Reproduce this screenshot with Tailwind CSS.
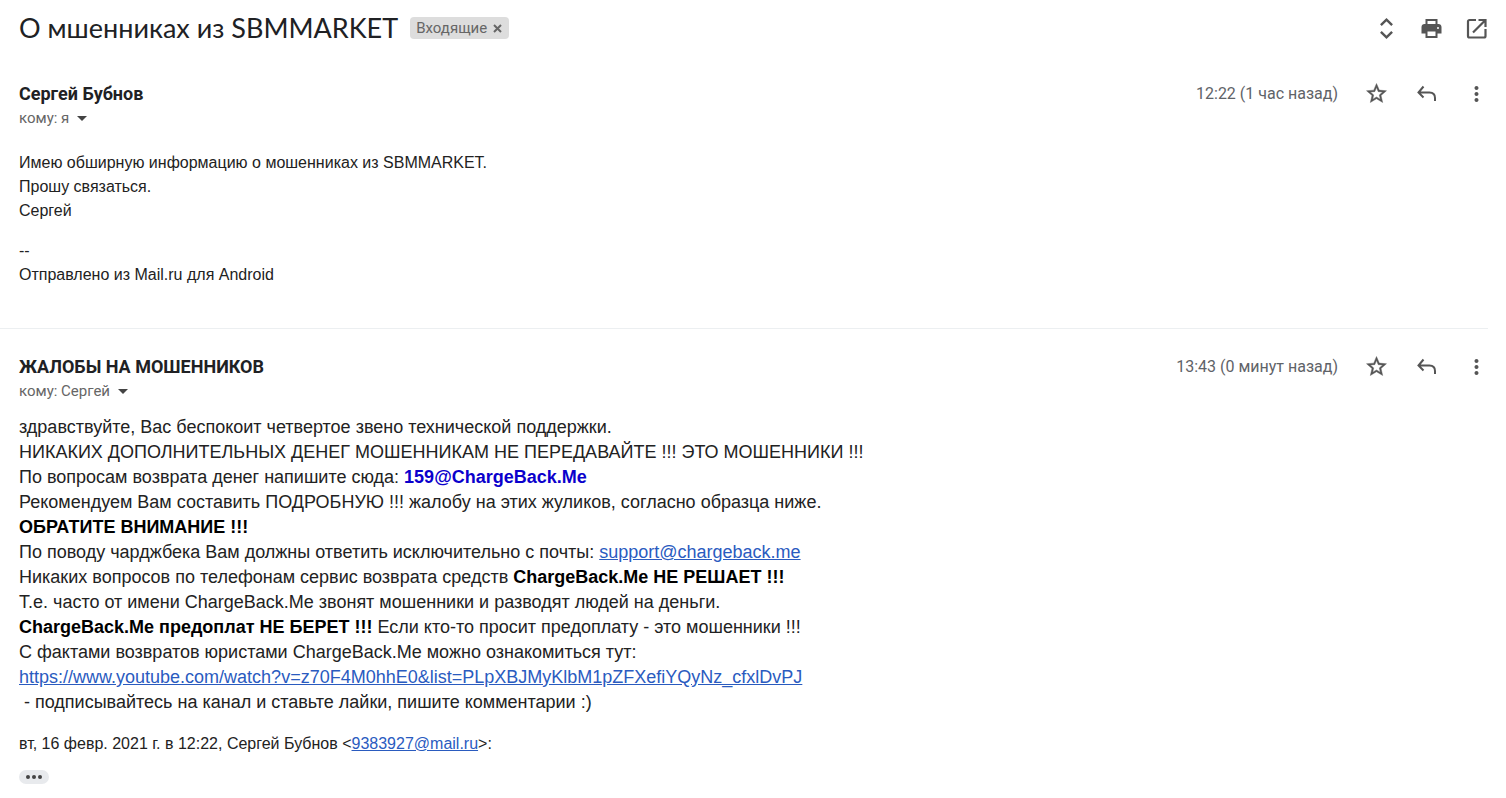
<!DOCTYPE html>
<html lang="ru">
<head>
    <meta charset="UTF-8">
    <meta name="viewport" content="width=device-width, initial-scale=1.0">
    <title>О мшенниках из SBMMARKET</title>
    <script src="https://cdn.jsdelivr.net/npm/@tailwindcss/browser@4"></script>
</head>
<body class="bg-white font-['Liberation_Sans',sans-serif] text-[#222222]">

    <!-- Shared icons -->
    <svg class="hidden">
        <symbol id="star" viewBox="0 0 24 24">
            <path transform="translate(.5 -.5)" stroke="currentColor" stroke-width=".4" d="M22 9.24l-7.19-.62L12 2 9.19 8.63 2 9.24l5.46 4.73L5.82 21 12 17.27 18.18 21l-1.63-7.03L22 9.24zM12 15.4l-3.76 2.27 1-4.28-3.32-2.88 4.38-.38L12 6.1l1.71 4.04 4.38.38-3.32 2.88 1 4.28L12 15.4z"/>
        </symbol>
        <symbol id="reply" viewBox="0 0 24 24">
            <path d="M9.500 4.500L4.500 10.500l5 5M4.500 10.500H15.500q5.500 0 5.500 5.500v3" fill="none" stroke="currentColor" stroke-width="2"/>
        </symbol>
        <symbol id="more" viewBox="0 0 24 24">
            <path transform="translate(.5 0)" d="M12 8c1.1 0 2-.9 2-2s-.9-2-2-2-2 .9-2 2 .9 2 2 2zm0 2c-1.1 0-2 .9-2 2s.9 2 2 2 2-.9 2-2-.9-2-2-2zm0 6c-1.1 0-2 .9-2 2s.9 2 2 2 2-.9 2-2-.9-2-2-2z"/>
        </symbol>
        <symbol id="caret" viewBox="0 0 10 5">
            <path d="M0 0h10L5 5z"/>
        </symbol>
    </svg>

    <div class="pr-[18px]">
        <!-- Subject -->
        <header class="flex items-center justify-between pl-[19px] pt-2">
            <div class="flex items-center gap-3">
                <h1 class="font-[Lato,sans-serif] text-[27px] leading-10 text-[#202124]">О мшенниках из SBMMARKET</h1>
                <span class="flex h-[22px] items-center gap-1 rounded bg-[#dddddd] px-[6px] font-[Roboto,sans-serif] text-[15px] text-[#666666]">
                    Входящие
                    <button aria-label="Удалить ярлык" class="flex size-3 items-center justify-center">
                        <svg class="size-[9px]" viewBox="0 0 9 9" fill="none" stroke="#666666" stroke-width="2"><path d="M1 1l7 7M8 1L1 8"/></svg>
                    </button>
                </span>
            </div>
            <div class="flex gap-[21px] text-[#555555]">
                <button aria-label="Развернуть все"><svg class="size-6" viewBox="0 0 24 24" fill="none" stroke="currentColor" stroke-width="2.400"><path d="M6.900 9.200L12.500 3.600l5.600 5.600M6.900 15.800l5.600 5.600 5.600-5.600"/></svg></button>
                <button aria-label="Печать"><svg class="size-6" viewBox="0 0 24 24" fill="currentColor"><path fill-rule="evenodd" d="M19.500 8H18.500V3h-12v5H5.500c-1.700 0-3 1.300-3 3v6.500h4V22h12v-4.500h4V11c0-1.700-1.300-3-3-3zM8.500 5h8v3h-8V5zm8 15h-8v-4.500h8V20zm2.500-7a1 1 0 1 1 0-2 1 1 0 0 1 0 2z"/></svg></button>
                <button aria-label="В новом окне"><svg class="size-6" viewBox="0 0 24 24" fill="none" stroke="currentColor" stroke-width="2.200"><path d="M12 4H5.500a1.500 1.500 0 0 0-1.500 1.500V20a1.500 1.500 0 0 0 1.500 1.500H20a1.500 1.500 0 0 0 1.500-1.500V13M14.500 4h7v7M21 4.500L9 16.500"/></svg></button>
            </div>
        </header>

        <!-- First message -->
        <article class="border-b border-[#eceff1] pl-[19px] pt-8 pb-[41px]">
            <div class="flex items-start justify-between font-[Roboto,sans-serif]">
                <div>
                    <h2 class="text-[18px] leading-7 font-bold text-[#202124]">Сергей Бубнов</h2>
                    <button class="flex items-center gap-2 text-[15px] leading-5 text-[#666666]">
                        кому: я
                        <svg class="h-[5px] w-[10px]" fill="#444444"><use href="#caret"/></svg>
                    </button>
                </div>
                <div class="flex h-7 items-center text-[#555555]">
                    <time class="mr-[26px] text-base text-[#5f6368]">12:22 (1 час назад)</time>
                    <div class="flex gap-[26px]">
                        <button aria-label="Пометить"><svg class="size-6" fill="currentColor"><use href="#star"/></svg></button>
                        <button aria-label="Ответить"><svg class="size-6" fill="currentColor"><use href="#reply"/></svg></button>
                        <button aria-label="Ещё"><svg class="size-6" fill="currentColor"><use href="#more"/></svg></button>
                    </div>
                </div>
            </div>
            <div class="mt-[23px] text-base leading-6">
                <p>Имею обширную информацию о мошенниках из SBMMARKET.</p>
                <p>Прошу связаться.</p>
                <p>Сергей</p>
                <p class="mt-4">--</p>
                <p>Отправлено из Mail.ru для Android</p>
            </div>
        </article>

        <!-- Second message -->
        <article class="pl-[19px] pt-6">
            <div class="flex items-start justify-between font-[Roboto,sans-serif]">
                <div>
                    <h2 class="text-[18px] leading-7 font-bold text-[#202124]">ЖАЛОБЫ НА МОШЕННИКОВ</h2>
                    <button class="flex items-center gap-2 text-[15px] leading-5 text-[#666666]">
                        кому: Сергей
                        <svg class="h-[5px] w-[10px]" fill="#444444"><use href="#caret"/></svg>
                    </button>
                </div>
                <div class="flex h-7 items-center text-[#555555]">
                    <time class="mr-[26px] text-base text-[#5f6368]">13:43 (0 минут назад)</time>
                    <div class="flex gap-[26px]">
                        <button aria-label="Пометить"><svg class="size-6" fill="currentColor"><use href="#star"/></svg></button>
                        <button aria-label="Ответить"><svg class="size-6" fill="currentColor"><use href="#reply"/></svg></button>
                        <button aria-label="Ещё"><svg class="size-6" fill="currentColor"><use href="#more"/></svg></button>
                    </div>
                </div>
            </div>
            <div class="mt-[14px] text-[18px] leading-[25px]">
                <p>здравствуйте, Вас беспокоит четвертое звено технической поддержки.</p>
                <p>НИКАКИХ ДОПОЛНИТЕЛЬНЫХ ДЕНЕГ МОШЕННИКАМ НЕ ПЕРЕДАВАЙТЕ !!! ЭТО МОШЕННИКИ !!!</p>
                <p>По вопросам возврата денег напишите сюда: <b class="text-[#0b00cc]">159@ChargeBack.Me</b></p>
                <p>Рекомендуем Вам составить ПОДРОБНУЮ !!! жалобу на этих жуликов, согласно образца ниже.</p>
                <p><b class="text-black">ОБРАТИТЕ ВНИМАНИЕ !!!</b></p>
                <p>По поводу чарджбека Вам должны ответить исключительно с почты: <a href="mailto:support@chargeback.me" class="text-[#2a5bbf] underline">support@chargeback.me</a></p>
                <p>Никаких вопросов по телефонам сервис возврата средств <b class="text-black">ChargeBack.Me НЕ РЕШАЕТ !!!</b></p>
                <p>Т.е. часто от имени ChargeBack.Me звонят мошенники и разводят людей на деньги.</p>
                <p><b class="text-black">ChargeBack.Me предоплат НЕ БЕРЕТ !!!</b> Если кто-то просит предоплату - это мошенники !!!</p>
                <p>С фактами возвратов юристами ChargeBack.Me можно ознакомиться тут:</p>
                <p><a href="https://www.youtube.com/watch?v=z70F4M0hhE0&amp;list=PLpXBJMyKlbM1pZFXefiYQyNz_cfxlDvPJ" class="text-[#2a5bbf] underline">https://www.youtube.com/watch?v=z70F4M0hhE0&amp;list=PLpXBJMyKlbM1pZFXefiYQyNz_cfxlDvPJ</a></p>
                <p>&nbsp;- подписывайтесь на канал и ставьте лайки, пишите комментарии :)</p>
            </div>
            <p class="mt-[17px] text-base leading-6">вт, 16 февр. 2021 г. в 12:22, Сергей Бубнов &lt;<a href="mailto:9383927@mail.ru" class="text-[#2a5bbf] underline">9383927@mail.ru</a>&gt;:</p>
            <button aria-label="Показать скрытый текст" class="mt-[14px] flex h-[14px] w-[30px] items-center justify-center gap-[2px] rounded-full bg-[#e8eaed]">
                <span class="size-[4px] rounded-full bg-[#444444]"></span>
                <span class="size-[4px] rounded-full bg-[#444444]"></span>
                <span class="size-[4px] rounded-full bg-[#444444]"></span>
            </button>
        </article>
    </div>
</body>
</html>
